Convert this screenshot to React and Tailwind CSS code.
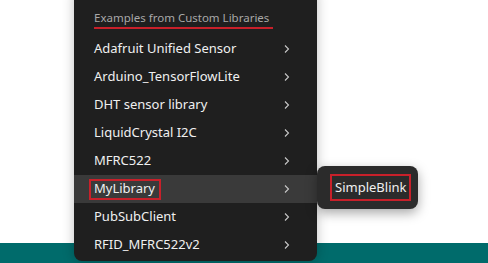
import React from 'react';

const items = [
  'Adafruit Unified Sensor',
  'Arduino_TensorFlowLite',
  'DHT sensor library',
  'LiquidCrystal I2C',
  'MFRC522',
  'MyLibrary',
  'PubSubClient',
  'RFID_MFRC522v2',
];

function Chevron() {
  return (
    <svg width="8" height="10" viewBox="0 0 8 10" fill="none" className="text-[#c8c8c8]">
      <path d="M2 1.5 L5.5 5 L2 8.5" stroke="currentColor" strokeWidth="1.1" />
    </svg>
  );
}

export default function App() {
  return (
    <div className="relative w-[488px] h-[263px] overflow-hidden flex flex-col bg-white font-['Noto_Sans',sans-serif]">
      <div className="flex-1 bg-white" />
      <div className="h-[20px] bg-[#006b6b]" />

      {/* main menu */}
      <div className="absolute left-[74px] top-[-8px] w-[243px] h-[269px] bg-[#1f1f1f] rounded-b-lg shadow-[0_0_12px_rgba(0,0,0,0.25)] pt-[9px]">
        <div className="h-[34px] flex items-center pl-[20px]">
          <span className="text-[11.5px] leading-none text-[#a8a8a8] border-b-2 border-[#c8202a] pb-[4px] pr-[4px] mt-[5px]">
            Examples from Custom Libraries
          </span>
        </div>
        {items.map((name) => {
          const active = name === 'MyLibrary';
          return (
            <div
              key={name}
              className={`h-[28px] flex items-center justify-between pl-[20px] pr-[26px] ${active ? 'bg-[#3a3a3a]' : ''}`}
            >
              {active ? (
                <span className="text-[13px] text-[#f0f0f0] border-2 border-[#c8202a] -ml-[5px] pl-[3px] pr-[4px] h-[21px] flex items-center">
                  {name}
                </span>
              ) : (
                <span className="text-[13px] text-[#f0f0f0]">{name}</span>
              )}
              <Chevron />
            </div>
          );
        })}
      </div>

      {/* submenu */}
      <div className="absolute left-[317px] top-[166px] w-[101px] h-[43px] bg-[#2b2b2b] rounded-lg shadow-[0_4px_12px_rgba(0,0,0,0.35)] flex items-center pl-[13px]">
        <span className="text-[13px] text-[#f0f0f0] border-2 border-[#c8202a] px-[3px] h-[27px] flex items-center">
          SimpleBlink
        </span>
      </div>
    </div>
  );
}
